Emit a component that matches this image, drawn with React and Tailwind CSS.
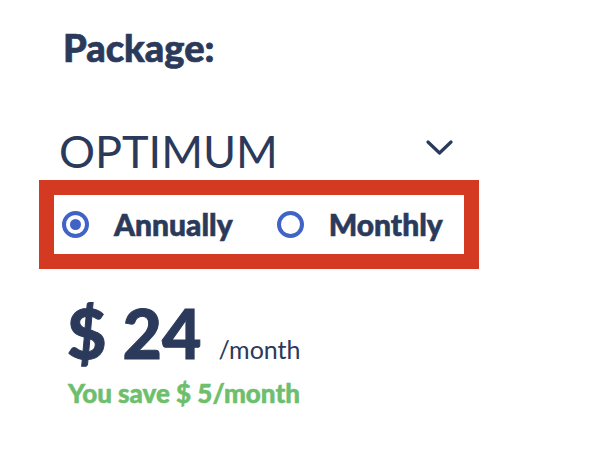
import React from 'react'

function Radio({ checked, label }) {
  return (
    <label className="flex items-center">
      <span className="flex h-[27px] w-[27px] items-center justify-center rounded-full border-[4px] border-[#4263c6]">
        {checked && <span className="h-[11px] w-[11px] rounded-full bg-[#4263c6]" />}
      </span>
      <span className="ml-[25px] text-[30px] font-black text-[#2b3a5b] [-webkit-text-stroke:0.6px_#2b3a5b]">{label}</span>
    </label>
  )
}

export default function App() {
  return (
    <div className="h-[452px] w-[606px] bg-white pl-[39px] pt-[22px] font-['Lato',sans-serif] text-[#2b3a5b]">
      <h2 className="ml-[24px] text-[38px] font-black leading-[50px] [-webkit-text-stroke:0.7px_#2b3a5b]">Package:</h2>

      <div className="mt-[56px] flex w-[440px] items-center justify-between pl-[20px] pr-[26px]">
        <span className="text-[45px] leading-[46px]">OPTIMUM</span>
        <svg width="27" height="15" viewBox="0 0 27 15" fill="none" className="mb-[8px]">
          <path d="M2 2l11.5 11L25 2" stroke="#2b3a5b" strokeWidth="3.2" strokeLinecap="round" strokeLinejoin="round" />
        </svg>
      </div>

      <div className="mt-[6px] flex h-[89px] w-[440px] items-center border-[15px] border-[#d33a21] pl-[8px]">
        <Radio checked label="Annually" />
        <div className="ml-[44px]">
          <Radio label="Monthly" />
        </div>
      </div>

      <div className="ml-[28px] mt-[28px] flex items-baseline">
        <span className="text-[68px] font-black leading-[72px] [-webkit-text-stroke:1px_#2b3a5b]">$ 24</span>
        <span className="ml-[17px] text-[25px]">/month</span>
      </div>
      <p className="ml-[29px] mt-[5px] text-[26px] font-black text-[#6dbf6d] [-webkit-text-stroke:0.5px_#6dbf6d]">You save $ 5/month</p>
    </div>
  )
}
